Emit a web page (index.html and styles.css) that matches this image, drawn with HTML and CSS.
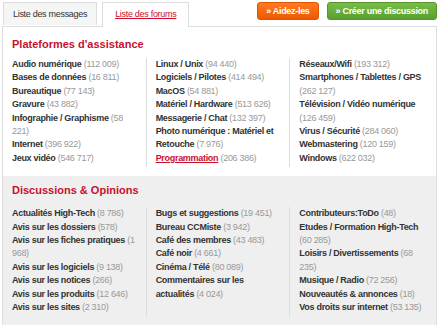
FILE: index.html
```html
<!DOCTYPE html>
<html lang="fr">
<head>
    <meta charset="utf-8">
    <title>Forums</title>
    <link rel="stylesheet" href="styles.css">
</head>
<body>
    <div class="haut">
        <nav class="onglets">
            <a class="onglet">Liste des messages</a>
            <a class="onglet actif"><span>Liste des forums</span></a>
        </nav>
        <div class="boutons">
            <a class="bouton orange">» Aidez-les</a>
            <a class="bouton vert">» Créer une discussion</a>
        </div>
    </div>

    <main class="panneau">
        <section class="bloc">
            <h2>Plateformes d'assistance</h2>
            <div class="colonnes">
                <ul>
                    <li><b>Audio numérique</b> <span>(112 009)</span></li>
                    <li><b>Bases de données</b> <span>(16 811)</span></li>
                    <li><b>Bureautique</b> <span>(77 143)</span></li>
                    <li><b>Gravure</b> <span>(43 882)</span></li>
                    <li><b>Infographie / Graphisme</b> <span>(58 221)</span></li>
                    <li><b>Internet</b> <span>(396 922)</span></li>
                    <li><b>Jeux vidéo</b> <span>(546 717)</span></li>
                </ul>
                <ul>
                    <li><b>Linux / Unix</b> <span>(94 440)</span></li>
                    <li><b>Logiciels / Pilotes</b> <span>(414 494)</span></li>
                    <li><b>MacOS</b> <span>(54 881)</span></li>
                    <li><b>Matériel / Hardware</b> <span>(513 626)</span></li>
                    <li><b>Messagerie / Chat</b> <span>(132 397)</span></li>
                    <li><b>Photo numérique : Matériel et Retouche</b> <span>(7 976)</span></li>
                    <li><b class="lien">Programmation</b> <span>(206 386)</span></li>
                </ul>
                <ul>
                    <li><b>Réseaux/Wifi</b> <span>(193 312)</span></li>
                    <li><b>Smartphones / Tablettes / GPS</b> <span>(262 127)</span></li>
                    <li><b>Télévision / Vidéo numérique</b> <span>(126 459)</span></li>
                    <li><b>Virus / Sécurité</b> <span>(284 060)</span></li>
                    <li><b>Webmastering</b> <span>(120 159)</span></li>
                    <li><b>Windows</b> <span>(622 032)</span></li>
                </ul>
            </div>
        </section>

        <section class="bloc gris">
            <h2>Discussions &amp; Opinions</h2>
            <div class="colonnes">
                <ul>
                    <li><b>Actualités High-Tech</b> <span>(8 786)</span></li>
                    <li><b>Avis sur les dossiers</b> <span>(578)</span></li>
                    <li><b>Avis sur les fiches pratiques</b> <span>(1 968)</span></li>
                    <li><b>Avis sur les logiciels</b> <span>(9 138)</span></li>
                    <li><b>Avis sur les notices</b> <span>(266)</span></li>
                    <li><b>Avis sur les produits</b> <span>(12 646)</span></li>
                    <li><b>Avis sur les sites</b> <span>(2 310)</span></li>
                </ul>
                <ul>
                    <li><b>Bugs et suggestions</b> <span>(19 451)</span></li>
                    <li><b>Bureau CCMiste</b> <span>(3 942)</span></li>
                    <li><b>Café des membres</b> <span>(43 483)</span></li>
                    <li><b>Café noir</b> <span>(4 661)</span></li>
                    <li><b>Cinéma / Télé</b> <span>(80 089)</span></li>
                    <li><b>Commentaires sur les actualités</b> <span>(4 024)</span></li>
                </ul>
                <ul>
                    <li><b>Contributeurs:ToDo</b> <span>(48)</span></li>
                    <li><b>Etudes / Formation High-Tech</b> <span>(60 285)</span></li>
                    <li><b>Loisirs / Divertissements</b> <span>(68 235)</span></li>
                    <li><b>Musique / Radio</b> <span>(72 256)</span></li>
                    <li><b>Nouveautés &amp; annonces</b> <span>(18)</span></li>
                    <li><b>Vos droits sur internet</b> <span>(53 135)</span></li>
                </ul>
            </div>
        </section>
    </main>
</body>
</html>
```

FILE: styles.css
```css
body {
    margin: 0;
    padding: 2px 3px 0 2px;
    font-family: "Liberation Sans", Arial, sans-serif;
    color: #333;
    background-color: white;
}

.haut {
    display: flex;
    justify-content: space-between;
    align-items: flex-start;
}

.onglets {
    display: flex;
    gap: 5px;
    padding-left: 1px;
}

.onglet {
    display: block;
    height: 22px;
    line-height: 22px;
    padding: 0 9px;
    font-size: 9px;
    letter-spacing: -0.3px;
    color: #333;
    background-color: #f5f5f5;
    border: 1px solid #ddd;
    border-bottom: none;
}

.actif {
    height: 24px;
    padding: 0 12px;
    background-color: white;
    position: relative;
    z-index: 1;
}

.actif span {
    color: #c8102e;
    text-decoration: underline;
}

.boutons {
    display: flex;
    gap: 8px;
}

.bouton {
    display: block;
    height: 16px;
    line-height: 16px;
    padding: 0 8px;
    font-size: 9px;
    letter-spacing: -0.3px;
    font-weight: bold;
    color: white;
    border-radius: 3px;
}

.orange {
    background: linear-gradient(#ff7a22, #ec5a00);
    border: 1px solid #e05500;
}

.vert {
    background: linear-gradient(#79bd47, #5a9e2e);
    border: 1px solid #56962b;
}

.panneau {
    border: 1px solid #ddd;
    margin-top: -1px;
}

.bloc {
    padding: 10px 2px 9px 0;
}

.gris {
    background-color: #efefef;
    padding-top: 7px;
    padding-bottom: 8px;
}

h2 {
    margin: 0 0 7px 9px;
    font-size: 11px;
    line-height: 14px;
    color: #c8102e;
}

.gris h2 {
    margin-bottom: 10px;
}

.colonnes {
    display: grid;
    grid-template-columns: repeat(3, 1fr);
}

ul {
    margin: 0;
    padding: 0 10px 2px 9px;
    list-style: none;
    border-right: 1px solid #ddd;
}

ul:last-child {
    border-right: none;
}

li {
    font-size: 9px;
    letter-spacing: -0.3px;
    line-height: 13.4px;
}

li b {
    color: #333;
}

li span {
    color: #999;
}

.lien {
    color: #c8102e;
    text-decoration: underline;
}
```
